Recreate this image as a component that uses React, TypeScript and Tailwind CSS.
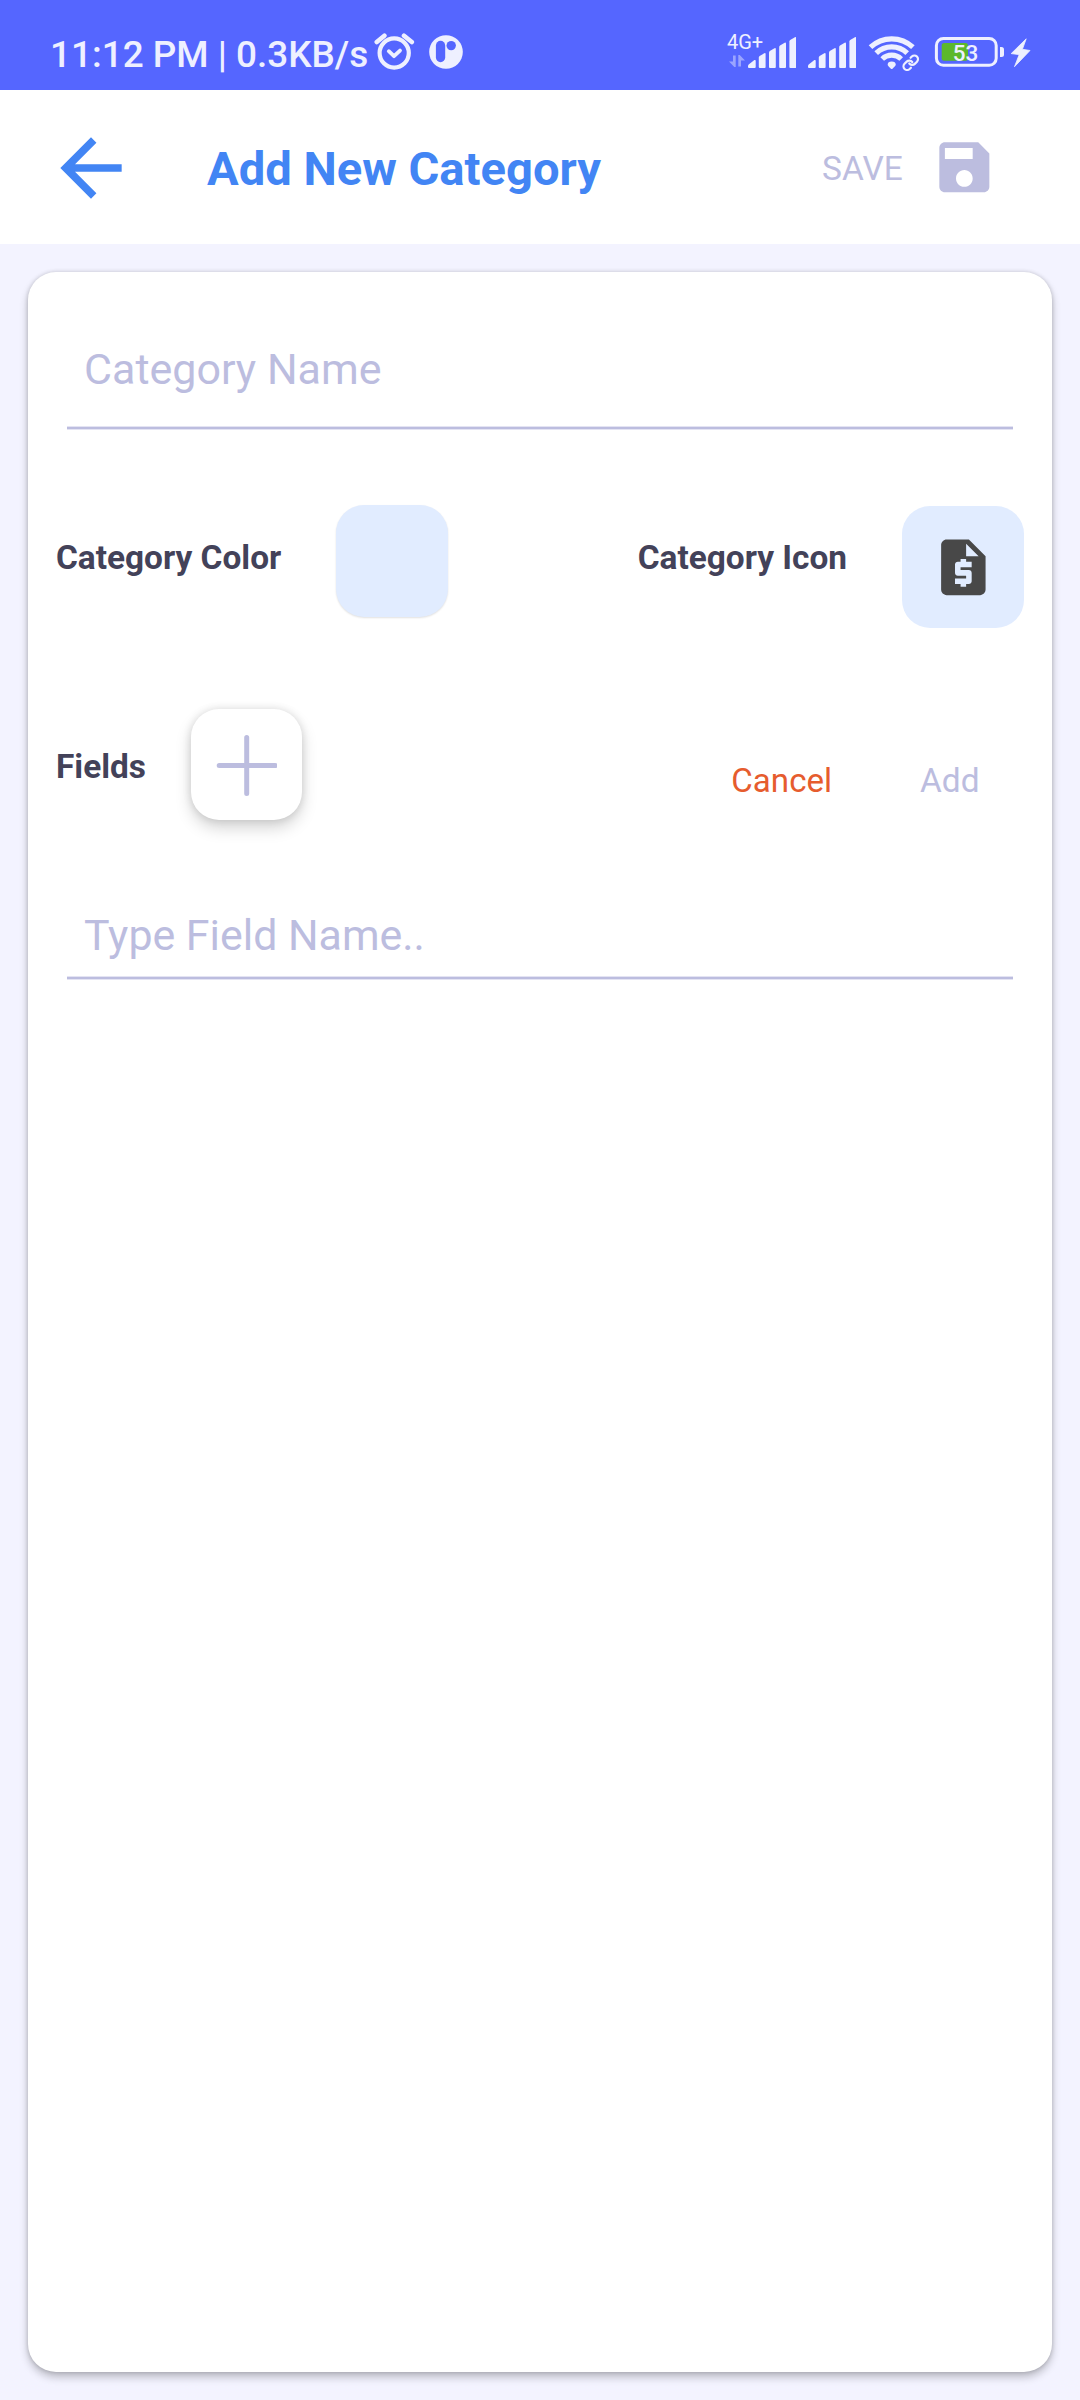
import { Link } from "lucide-react";

function AlarmIcon() {
  return (
    <svg className="ml-[6px] h-10 w-[41px]" viewBox="374 32 41 40" fill="none" stroke="#eef0ff" strokeWidth="4.6" strokeLinecap="round" strokeLinejoin="round">
      <circle cx="394.2" cy="53" r="14.6" strokeWidth="4.2" />
      <path d="M388.8 51.2l5.2 5 6-5.6" strokeWidth="3.8" />
      <path d="M376.8 42l7.6-6.3M404 35.7l7.8 6.3" />
    </svg>
  );
}

function PanelIcon() {
  return (
    <svg className="ml-[13px] h-10 w-9" viewBox="428 32 36 40">
      <circle cx="446" cy="52" r="16.8" fill="#eef0ff" />
      <rect x="435.9" y="40.8" width="9.3" height="21.4" rx="4.65" fill="#5566ff" />
      <circle cx="451.2" cy="45.6" r="4.7" fill="#5566ff" />
    </svg>
  );
}

function SignalBars() {
  return (
    <svg className="h-10 w-12" viewBox="748 32 48 40" fill="#eef0ff">
      <path d="M748 66.3q0-1.3 1-2l5.4-4.2q1.3-.7 1.3.8V67q0 1-1 1h-5.7q-1 0-1-1z" />
      <path d="M758.8 57.5q0-1 .8-1.600l4.700-2.600q1.300-.6 1.300.8V67q0 1-1 1h-4.800q-1 0-1-1z" />
      <path d="M769 52.500q0-1 .8-1.600l4.700-2.600q1.300-.6 1.300.8V67q0 1-1 1H770q-1 0-1-1z" />
      <path d="M779.200 47q0-1 .8-1.600l4.700-2.600q1.300-.6 1.300.8V67q0 1-1 1h-4.800q-1 0-1-1z" />
      <path d="M789.400 41.500q0-1 .8-1.600l4.700-2.600q1.300-.6 1.300.8V67q0 1-1 1h-4.800q-1 0-1-1z" />
    </svg>
  );
}

function WifiIcon() {
  return (
    <div className="relative ml-3 h-10 w-[51px]">
      <svg className="h-10 w-[51px]" viewBox="869 32 51 40" fill="none" stroke="#eef0ff" strokeWidth="5.2">
        <path d="M871.5 47.2A31 31 0 0 1 913.9 47.2" />
        <path d="M877.2 53.2A22.3 22.3 0 0 1 908.2 53.2" />
        <path d="M883.2 59A13.7 13.7 0 0 1 902.2 59" />
        <path d="M888.7 64.5q0-3 4-3t4 3q0 1-.8 1.8l-2.4 2.4q-.8.7-1.6 0l-2.4-2.4q-.8-.8-.8-1.8z" fill="#eef0ff" stroke="none" />
      </svg>
      <Link className="absolute top-[21.5px] left-[34px]" size={17.5} strokeWidth={3} color="#eef0ff" />
    </div>
  );
}

function Battery() {
  return (
    <div className="relative ml-[15px] h-10 w-[72px]">
      <svg className="h-10 w-[72px]" viewBox="934 32 72 40">
        <rect x="936.4" y="38.4" width="59.8" height="26.9" rx="7" fill="none" stroke="#eef0ff" strokeWidth="3" />
        <rect x="941.7" y="43" width="26.3" height="17.8" rx="2.5" fill="#5cb82c" />
        <path d="M1000 47h1.5q2.5 0 2.5 2.5v5q0 2.5-2.5 2.5H1000z" fill="#eef0ff" />
      </svg>
      <span className="absolute top-[8.4px] left-[18.8px] text-[22.5px] leading-[26px] font-medium">53</span>
    </div>
  );
}

function StatusBar() {
  return (
    <div className="flex h-[90px] items-center bg-[#5566ff] pt-[14px] pl-[50px] text-[#eef0ff]">
      <span className="mt-[5px] w-[318px] text-[36.9px] leading-[44px] font-medium whitespace-nowrap">11:12 PM | 0.3KB/s</span>
      <AlarmIcon />
      <PanelIcon />
      <div className="relative ml-auto flex pl-[21px]">
        <span className="absolute top-[-1px] left-0 text-[20px] leading-[22px] tracking-[-0.1px]">4G+</span>
        <svg className="absolute top-[23px] left-[1px] h-3 w-[18px]" viewBox="0 0 18 12" fill="#eef0ff" opacity="0.45">
          <path d="M5 .5h2.7V12H6.3L1 6.5h4z" />
          <path d="M10.3 0h1.4L17 5.5h-4V11.5h-2.7z" />
        </svg>
        <SignalBars />
      </div>
      <div className="ml-3 flex">
        <SignalBars />
      </div>
      <WifiIcon />
      <Battery />
      <svg className="mr-[48px] ml-1 h-10 w-[22px]" viewBox="1010 32 22 40" fill="#eef0ff" stroke="#eef0ff" strokeWidth="0.8" strokeLinejoin="round">
        <path d="M1026.2 38.8l-15 14.8 8 1-4.7 12.1 15.5-16.2-7.6-1.2z" />
      </svg>
    </div>
  );
}

function Header() {
  return (
    <header className="flex h-[154px] items-center bg-white pr-[82px] pl-[45px]">
      <svg className="mt-[2px] size-[92px]" viewBox="0 0 24 24" fill="#4285f4">
        <path d="M20 11H7.83l5.59-5.59L12 4l-8 8 8 8 1.41-1.41L7.83 13H20z" />
      </svg>
      <h1 className="mt-1 ml-[70px] text-[47.15px] leading-[56px] font-bold whitespace-nowrap text-[#4285f4]">Add New Category</h1>
      <span className="mt-1 ml-auto text-[33.5px] leading-10 text-[#bcbddf]">SAVE</span>
      <svg className="ml-[28.5px] size-[66.7px]" viewBox="0 0 24 24" fill="#bcbddf">
        <path d="M17 3H5c-1.11 0-2 .9-2 2v14c0 1.1.89 2 2 2h14c1.1 0 2-.9 2-2V7l-4-4zm-5 16c-1.66 0-3-1.34-3-3s1.34-3 3-3 3 1.34 3 3-1.34 3-3 3zm3-10H5V5h10v4z" />
      </svg>
    </header>
  );
}

function Underline() {
  return <div className="mx-[39px] h-1 border-y border-[#e4e4f3] bg-[#bcbddf]" />;
}

export default function App() {
  return (
    <div className="flex h-[2400px] w-[1080px] flex-col overflow-hidden bg-[#f3f3ff] font-[Roboto,sans-serif]">
      <StatusBar />
      <Header />
      <main className="mx-7 mt-7 h-[2100px] rounded-[28px] bg-white shadow-[0_5px_9px_rgba(0,0,0,0.24),0_0_4px_rgba(0,0,0,0.16)]">
        <div className="flex h-[154px] items-end pb-8 pl-14 text-[43px] leading-[50px] text-[#bcbddf]">Category Name</div>
        <Underline />

        <section className="mx-7 mt-[76px] flex h-[122px] items-start text-[33.4px] leading-10 font-bold text-[#434259]">
          <span className="mt-8">Category Color</span>
          <div className="-mt-px ml-[55px] h-[112px] w-[112px] rounded-[28px] bg-[#e1ecff] shadow-[0_1px_2px_rgba(0,0,0,0.12)]" />
          <span className="mt-8 ml-auto">Category Icon</span>
          <div className="ml-[55px] flex size-[122px] items-center justify-center rounded-[28px] bg-[#e1ecff]">
            <svg className="size-[66.7px]" viewBox="0 0 24 24" fill="#484848">
              <path d="M14 2H6c-1.1 0-1.99.9-1.99 2L4 20c0 1.1.89 2 1.99 2H18c1.1 0 2-.9 2-2V8l-6-6zm1 10h-4v1h3c.55 0 1 .45 1 1v3c0 .55-.45 1-1 1h-1v1h-2v-1H9v-2h4v-1h-3c-.55 0-1-.45-1-1v-3c0-.55.45-1 1-1h1V9h2v1h2v2zm-2-4V3.5L17.5 8H13z" />
            </svg>
          </div>
        </section>

        <section className="mx-7 mt-[81px] flex h-[111px] items-start text-[33.4px] leading-10">
          <span className="mt-[38px] font-bold text-[#434259]">Fields</span>
          <div className="ml-[45px] flex size-[111px] items-center justify-center rounded-[28px] bg-white shadow-[0_8px_16px_rgba(0,0,0,0.17),0_0_9px_rgba(0,0,0,0.12)]">
            <svg className="size-[62px]" viewBox="0 0 62 62" stroke="#bcbddf" strokeWidth="5" strokeLinecap="round">
              <path d="M31.7 3.5v56M4.2 31.5h56" />
            </svg>
          </div>
          <span className="mt-[52px] ml-auto text-[33.1px] text-[#e65c2e]">Cancel</span>
          <span className="mt-[52px] mr-[44.5px] ml-[88px] text-[#bcbddf]">Add</span>
        </section>

        <div className="flex h-[156px] items-end pb-4 pl-14 text-[42.9px] leading-[50px] text-[#bcbddf]">Type Field Name..</div>
        <Underline />
      </main>
    </div>
  );
}
